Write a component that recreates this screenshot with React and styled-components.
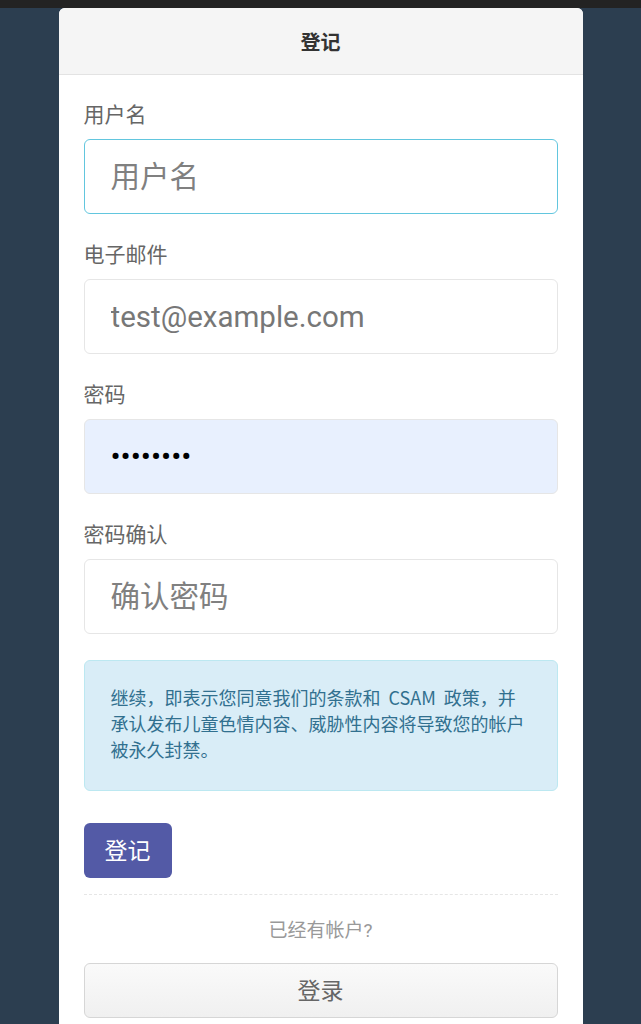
import React from "react";
import styled, { createGlobalStyle } from "styled-components";

const Global = createGlobalStyle`
  html, body { margin: 0; padding: 0; }
  body {
    background: #2c3e50;
    font-family: Roboto, "Noto Sans CJK SC", "Noto Sans", sans-serif;
  }
  * { box-sizing: border-box; }
`;

const TopBar = styled.div`
  height: 8px;
  background: #232323;
`;

const Card = styled.div`
  width: 524px;
  margin: 0 auto;
  background: #fff;
  border-radius: 6px 6px 0 0;
  overflow: hidden;
`;

const Header = styled.div`
  height: 67px;
  background: #f5f5f5;
  border-bottom: 1px solid #e3e3e3;
  display: flex;
  align-items: center;
  justify-content: center;
  font-size: 20px;
  font-weight: 700;
  color: #333;
`;

const Body = styled.div`
  padding: 25px 25px 8px;
  display: flex;
  flex-direction: column;
`;

const Field = styled.div`
  display: flex;
  flex-direction: column;
  margin-bottom: 26px;
`;

const Label = styled.label`
  font-size: 21px;
  line-height: 30px;
  color: #666;
  margin-bottom: 9px;
`;

const Input = styled.input`
  height: 75px;
  width: 100%;
  border-radius: 6px;
  border: 1.5px solid ${(p) => (p.$focus ? "#62c6de" : "#e6e6e6")};
  background: ${(p) => (p.$autofill ? "#e8f0fe" : "#fff")};
  padding: 0 26px;
  font-family: Roboto, "Noto Sans CJK SC", sans-serif;
  font-size: ${(p) => (p.$password ? "30px" : "29.5px")};
  color: #000;
  letter-spacing: 0;
  outline: none;
  &::placeholder { color: #808080; }
  &.filled { color: #777; }
`;

const Alert = styled.div`
  background: #d9edf7;
  border: 1px solid #bce8f1;
  border-radius: 6px;
  padding: 23px 26px 28px;
  color: #31708f;
  font-family: "Noto Sans CJK SC", Roboto, sans-serif;
  font-size: 18px;
  line-height: 26px;
  word-spacing: 4px;
  margin-bottom: 32px;
`;

const Primary = styled.button`
  align-self: flex-start;
  height: 55px;
  padding: 0 21px 3px;
  border: none;
  border-radius: 6px;
  background: #535aa6;
  color: #fff;
  font-family: Roboto, "Noto Sans CJK SC", sans-serif;
  font-size: 23px;
`;

const Divider = styled.div`
  border-top: 1.5px dashed #e6e6e6;
  margin: 16px 0 0;
`;

const Note = styled.div`
  text-align: center;
  font-size: 19px;
  color: #999;
  padding: 20px 0 21px;
`;

const Secondary = styled.button`
  height: 55px;
  width: 100%;
  padding-bottom: 4px;
  border: 1.5px solid #d6d6d6;
  border-radius: 6px;
  background: linear-gradient(#fafafa, #f0f0f0);
  color: #666;
  font-family: Roboto, "Noto Sans CJK SC", sans-serif;
  font-size: 23px;
`;

export default function App() {
  return (
    <>
      <Global />
      <TopBar />
      <Card>
        <Header>登记</Header>
        <Body>
          <Field>
            <Label>用户名</Label>
            <Input $focus placeholder="用户名" />
          </Field>
          <Field>
            <Label>电子邮件</Label>
            <Input className="filled" defaultValue="test@example.com" />
          </Field>
          <Field>
            <Label>密码</Label>
            <Input $autofill $password type="password" defaultValue="••••••••" />
          </Field>
          <Field>
            <Label>密码确认</Label>
            <Input placeholder="确认密码" />
          </Field>
          <Alert>
            继续，即表示您同意我们的条款和 CSAM 政策，并承认发布儿童色情内容、威胁性内容将导致您的帐户被永久封禁。
          </Alert>
          <Primary>登记</Primary>
          <Divider />
          <Note>已经有帐户?</Note>
          <Secondary>登录</Secondary>
        </Body>
      </Card>
    </>
  );
}
